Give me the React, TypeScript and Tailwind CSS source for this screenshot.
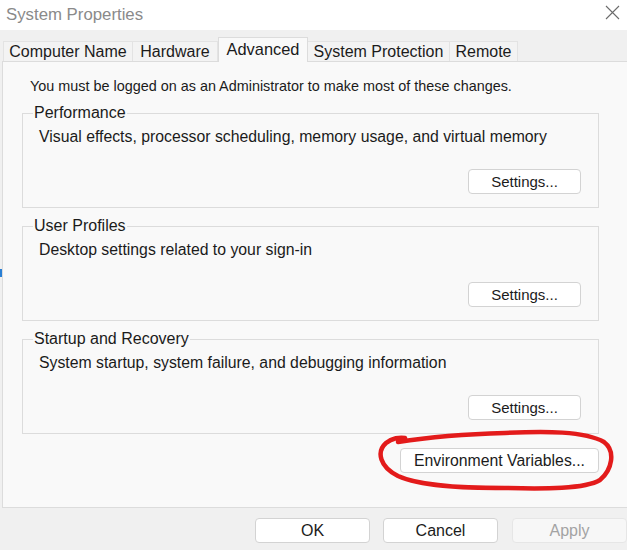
const font = { fontFamily: '"Liberation Sans", Arial, sans-serif' }

function Btn({ label, className = "", disabled = false }: { label: string; className?: string; disabled?: boolean }) {
  return (
    <button
      className={`h-[25px] rounded-[4px] border leading-none ${
        disabled ? "border-[#e6e6e6] bg-[#f7f7f7] text-[#a3a3a3]" : "border-[#d3d3d3] bg-white text-[#1b1b1b]"
      } ${className}`}
    >
      {label}
    </button>
  )
}

function Group({ title, text }: { title: string; text: string }) {
  return (
    <div className="relative flex h-[95px] w-[577px] flex-col border border-[#dcdcdc] pt-[14px] pr-[17px] pb-[12px] pl-[16px]">
      <span className="absolute left-[10px] top-[-10px] bg-[#f9f9f9] px-[1px] text-[16px] leading-[18px] text-[#1b1b1b]">
        {title}
      </span>
      <p className="text-[15.8px] leading-[18px] text-[#1b1b1b]">{text}</p>
      <Btn label="Settings..." className="mt-auto mb-[1px] w-[113px] self-end text-[15px]" />
    </div>
  )
}

const tabs = [
  { name: "Computer Name", w: "w-[130px]" },
  { name: "Hardware", w: "w-[85px]" },
  { name: "Advanced", w: "w-[90px]", active: true },
  { name: "System Protection", w: "w-[142px]" },
  { name: "Remote", w: "w-[68px]" },
]

export default function App() {
  return (
    <div className="relative h-[550px] w-[627px] overflow-hidden bg-[#f0f0f0]" style={font}>
      {/* title bar */}
      <div className="flex h-[30px] items-center justify-between bg-white pl-[6px] pr-[7px]">
        <span className="text-[16.8px] text-[#8a8a8a]">System Properties</span>
        <svg width="15" height="15" viewBox="0 0 15 15" className="mb-[6px]">
          <path d="M1 1 L14 14 M14 1 L1 14" stroke="#6b6b6b" strokeWidth="1.1" />
        </svg>
      </div>

      {/* tabs */}
      <div className="mt-[7px] flex h-[24px] items-end pl-[3px]">
        {tabs.map((t) =>
          t.active ? (
            <div
              key={t.name}
              className={`${t.w} relative z-10 mb-[-1px] flex h-[25px] items-start justify-center border border-b-0 border-[#dcdcdc] bg-[#f9f9f9] pt-[2px] text-[16.4px] leading-[18px] text-[#1b1b1b]`}
            >
              {t.name}
            </div>
          ) : (
            <div
              key={t.name}
              className={`${t.w} flex h-[20px] items-center justify-center border border-b-0 border-l-0 border-[#e3e3e3] bg-[#f3f3f3] text-[16px] leading-[18px] text-[#1b1b1b] first:border-l`}
            >
              {t.name}
            </div>
          )
        )}
      </div>

      {/* panel */}
      <div className="ml-[2px] flex h-[447px] flex-col border border-r-0 border-[#dcdcdc] bg-[#f9f9f9] pt-[15px]">
        <p className="pl-[27px] text-[14.4px] leading-[18px] text-[#1b1b1b]">
          You must be logged on as an Administrator to make most of these changes.
        </p>
        <div className="ml-[19px] mt-[18px] flex w-[577px] flex-col gap-[18px]">
          <Group title="Performance" text="Visual effects, processor scheduling, memory usage, and virtual memory" />
          <Group title="User Profiles" text="Desktop settings related to your sign-in" />
          <Group title="Startup and Recovery" text="System startup, system failure, and debugging information" />
        </div>
        <div className="ml-[19px] mt-[14px] flex w-[577px] justify-end">
          <Btn label="Environment Variables..." className="w-[199px] text-[15.8px]" />
        </div>
      </div>

      {/* dialog buttons */}
      <div className="mt-[10px] flex pl-[255px] text-[16px]">
        <Btn label="OK" className="w-[115px]" />
        <Btn label="Cancel" className="ml-[13px] w-[115px]" />
        <Btn label="Apply" disabled className="ml-[14px] w-[115px]" />
      </div>

      {/* stray blue mark on left edge */}
      <div className="absolute left-0 top-[269px] h-[8px] w-[2px] bg-[#2a7fd4]" />

      {/* red hand-drawn annotation */}
      <svg className="pointer-events-none absolute inset-0" width="627" height="550">
        <path
          d="M398 442 C 430 437, 470 434, 505 433 C 545 431, 585 431, 604 442 C 616 451, 612 470, 600 480 C 585 489, 545 489, 505 488 C 460 488, 420 486, 398 476 C 380 467, 376 452, 386 443 C 392 438, 400 437, 405 438"
          fill="none"
          stroke="#e31b1b"
          strokeWidth="4.5"
          strokeLinecap="round"
        />
      </svg>
    </div>
  )
}
